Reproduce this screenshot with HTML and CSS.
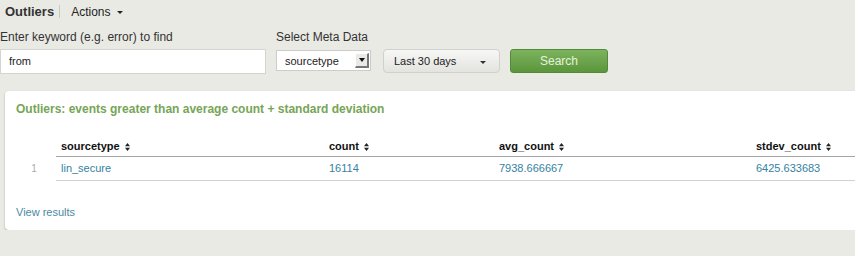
FILE: index.html
```html
<!DOCTYPE html>
<html lang="en">
<head>
  <meta charset="UTF-8" />
  <title>Outliers</title>
  <link rel="stylesheet" href="styles.css">
</head>
<body>
  <div class="app-bar">
    <span class="app-title">Outliers</span>
    <span class="divider"></span>
    <span class="actions">Actions <span class="caret"></span></span>
  </div>

  <div class="controls">
    <div class="field">
      <label class="field-label">Enter keyword (e.g. error) to find</label>
      <div class="text-input">from</div>
    </div>
    <div class="field">
      <label class="field-label">Select Meta Data</label>
      <div class="row">
        <div class="select">
          <span>sourcetype</span>
          <span class="select-arrow"><span class="caret"></span></span>
        </div>
        <button class="time-btn">Last 30 days <span class="caret"></span></button>
        <button class="search-btn">Search</button>
      </div>
    </div>
  </div>

  <div class="panel">
    <h2 class="panel-title">Outliers: events greater than average count + standard deviation</h2>
    <table class="results">
      <colgroup>
        <col class="c-num"><col class="c-1"><col class="c-2"><col class="c-3"><col class="c-4">
      </colgroup>
      <thead>
        <tr>
          <th class="num"></th>
          <th>sourcetype <svg class="sort" viewBox="0 0 5 8" width="5" height="8"><path d="M0 3.2 L2.5 0 L5 3.2Z M0 4.8 L2.5 8 L5 4.8Z"/></svg></th>
          <th>count <svg class="sort" viewBox="0 0 5 8" width="5" height="8"><path d="M0 3.2 L2.5 0 L5 3.2Z M0 4.8 L2.5 8 L5 4.8Z"/></svg></th>
          <th>avg_count <svg class="sort" viewBox="0 0 5 8" width="5" height="8"><path d="M0 3.2 L2.5 0 L5 3.2Z M0 4.8 L2.5 8 L5 4.8Z"/></svg></th>
          <th>stdev_count <svg class="sort" viewBox="0 0 5 8" width="5" height="8"><path d="M0 3.2 L2.5 0 L5 3.2Z M0 4.8 L2.5 8 L5 4.8Z"/></svg></th>
        </tr>
      </thead>
      <tbody>
        <tr>
          <td class="num">1</td>
          <td><a href="#">lin_secure</a></td>
          <td><a href="#">16114</a></td>
          <td><a href="#">7938.666667</a></td>
          <td><a href="#">6425.633683</a></td>
        </tr>
      </tbody>
    </table>
    <a class="view-link" href="#">View results</a>
  </div>
</body>
</html>
```

FILE: styles.css
```css
body {
  margin: 0;
  background: #eaeae5;
  font-family: "Liberation Sans", Arial, sans-serif;
  color: #333;
  overflow: hidden;
}

.app-bar {
  display: flex;
  align-items: center;
  height: 23px;
  padding: 0 5px;
}

.app-title {
  font-size: 13px;
  font-weight: bold;
  color: #333;
}

.divider {
  width: 1px;
  height: 13px;
  background: #c8c8c4;
  margin: 0 11px 0 5px;
}

.actions {
  font-size: 12px;
  color: #222;
}

.caret {
  display: inline-block;
  width: 0;
  height: 0;
  border-left: 3px solid transparent;
  border-right: 3px solid transparent;
  border-top: 3px solid #222;
  vertical-align: middle;
  margin-left: 3px;
}

.controls {
  display: flex;
  gap: 10px;
  padding-top: 7px;
}

.field {
  display: flex;
  flex-direction: column;
}

.field-label {
  font-size: 12px;
  line-height: 14px;
  color: #333;
  margin-bottom: 5px;
}

.text-input {
  box-sizing: border-box;
  width: 266px;
  height: 25px;
  background: #fff;
  border: 1px solid #d4d4d0;
  font-size: 11px;
  line-height: 23px;
  padding-left: 8px;
  color: #222;
}

.row {
  display: flex;
  align-items: flex-start;
}

.select {
  box-sizing: border-box;
  display: flex;
  align-items: center;
  justify-content: space-between;
  width: 95px;
  height: 21px;
  margin-top: 1px;
  background: #fff;
  border: 1px solid #ccc;
  font-size: 11px;
  padding: 0 1px 0 8px;
  color: #222;
}

.select-arrow {
  box-sizing: border-box;
  width: 14px;
  height: 15px;
  background: #e9e9e6;
  border-right: 2px solid #777;
  border-bottom: 2px solid #777;
  border-top: 1px solid #fff;
  border-left: 1px solid #fff;
  display: flex;
  align-items: center;
  justify-content: center;
}

.select-arrow .caret {
  margin: 0;
  border-width: 4px 3px 0;
  border-top-color: #111;
}

button {
  font-family: inherit;
  cursor: pointer;
}

.time-btn {
  box-sizing: border-box;
  width: 117px;
  height: 24px;
  margin-left: 12px;
  padding: 0 0 0 10px;
  text-align: left;
  font-size: 11px;
  color: #222;
  border: 1px solid #d0d0cc;
  border-radius: 4px;
  background: linear-gradient(#f7f7f5, #e3e3e0);
}

.time-btn .caret {
  margin-left: 21px;
  border-top-color: #333;
}

.search-btn {
  box-sizing: border-box;
  width: 98px;
  height: 24px;
  margin-left: 10px;
  font-size: 12px;
  color: #e6f2de;
  border: 1px solid #55893a;
  border-radius: 3px;
  background: linear-gradient(#7cb35e, #5b963b);
}

.panel {
  margin: 17px -20px 0 5px;
  height: 139px;
  box-sizing: border-box;
  background: #fff;
  border-radius: 4px;
  box-shadow: 0 1px 2px rgba(0, 0, 0, 0.3);
  padding: 10px 0 0 11px;
}

.panel-title {
  margin: 0;
  font-size: 12px;
  line-height: 16px;
  font-weight: bold;
  color: #76a557;
}

.results {
  margin-top: 19px;
  border-collapse: collapse;
  table-layout: fixed;
  width: 880px;
  font-size: 11px;
  line-height: 13px;
}

.c-num { width: 40px; }
.c-1 { width: 268px; }
.c-2 { width: 170px; }
.c-3 { width: 257px; }
.c-4 { width: 145px; }

.results th {
  text-align: left;
  font-weight: bold;
  color: #111;
  padding: 4px 5px 3px;
  border-bottom: 1px solid #a5a5a5;
}

.results td {
  padding: 5px 5px 5px;
  border-bottom: 1px solid #d2d2d2;
}

.results .num {
  border-bottom: none;
  text-align: center;
  color: #aaa;
  font-size: 10px;
  padding-right: 9px;
}

.sort {
  fill: #222;
  vertical-align: -1px;
  margin-left: 2px;
}

.results a {
  color: #3482a0;
  text-decoration: none;
}

.view-link {
  display: inline-block;
  margin-top: 25px;
  font-size: 11px;
  color: #4a89a2;
  text-decoration: none;
}
```
